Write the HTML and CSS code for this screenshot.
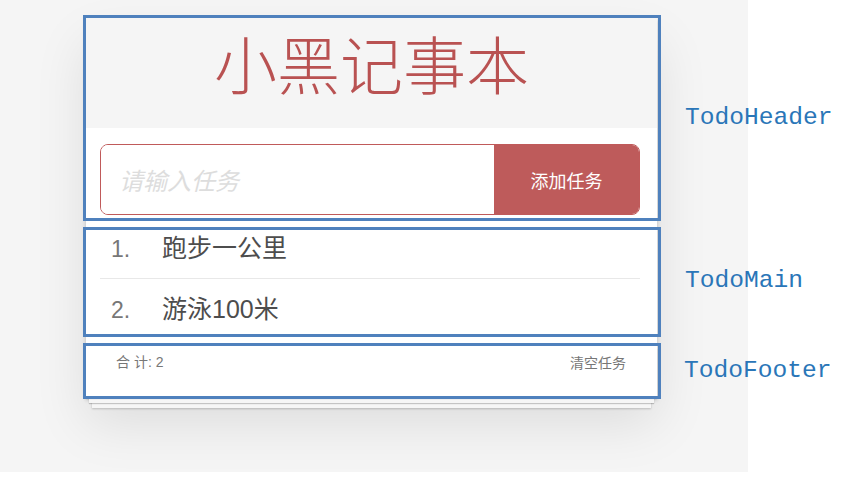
FILE: index.html
```html
<!DOCTYPE html>
<html lang="zh">
<head>
<meta charset="utf-8">
<title>小黑记事本</title>
<link rel="stylesheet" href="styles.css">
</head>
<body>
<div class="stage">
  <section class="todo-card">
    <header class="todo-header">
      <h1 class="title">小黑记事本</h1>
      <div class="input-section">
        <div class="input-row">
          <input class="new-todo" type="text" placeholder="请输入任务">
          <button class="add-btn">添加任务</button>
        </div>
      </div>
    </header>
    <ul class="todo-list">
      <li class="todo-item"><span class="index">1.</span><span class="label">跑步一公里</span></li>
      <li class="todo-item"><span class="index">2.</span><span class="label">游泳100米</span></li>
    </ul>
    <footer class="todo-footer">
      <span class="count">合 计: 2</span>
      <button class="clear">清空任务</button>
    </footer>
  </section>

  <div class="anno anno-header"></div>
  <div class="anno anno-main"></div>
  <div class="anno anno-footer"></div>
  <span class="anno-label label-header">TodoHeader</span>
  <span class="anno-label label-main">TodoMain</span>
  <span class="anno-label label-footer">TodoFooter</span>
</div>
</body>
</html>
```

FILE: styles.css
```css
* { box-sizing: border-box; }

html, body {
  margin: 0;
  padding: 0;
  background: #ffffff;
}

body {
  font-family: "Liberation Sans", "Noto Sans CJK SC", sans-serif;
}

.stage {
  position: relative;
  width: 748px;
  height: 472px;
  background: #f5f5f5;
  padding: 18px 0 0 86px;
}

.todo-card {
  width: 571px;
  position: relative;
  z-index: 0;
  background: #ffffff;
  box-shadow: 0 2px 4px 0 rgba(0, 0, 0, 0.2), 0 25px 50px 0 rgba(0, 0, 0, 0.1);
}

.todo-header {
  display: flex;
  flex-direction: column;
}

.title {
  margin: 0;
  background: #f5f5f5;
  height: 110px;
  padding-top: 12px;
  text-align: center;
  font-family: "Noto Sans CJK SC", sans-serif;
  font-weight: 300;
  font-size: 63px;
  line-height: 63px;
  color: #b95252;
}

.input-section {
  padding: 16px 17px 3px 14px;
}

.input-row {
  display: flex;
  height: 71px;
  border: 1px solid #c05a5a;
  border-radius: 8px;
  overflow: hidden;
}

.new-todo {
  flex: 1;
  border: none;
  outline: none;
  padding: 0 0 0 18px;
  font-family: "Noto Sans CJK SC", sans-serif;
  font-size: 24px;
  color: #555;
  background: #fff;
}

.new-todo::placeholder {
  color: #dddddd;
  font-style: italic;
}

.add-btn {
  width: 145px;
  border: none;
  background: #be5b5b;
  color: #ffffff;
  font-family: "Noto Sans CJK SC", sans-serif;
  font-size: 18px;
  padding: 0;
}

.todo-list {
  list-style: none;
  margin: 0;
  padding: 0 17px 0 14px;
}

.todo-item {
  display: flex;
  align-items: baseline;
  height: 60px;
  line-height: 60px;
  padding-left: 11px;
  font-size: 25px;
  color: #4d4d4d;
}

.todo-item + .todo-item {
  border-top: 1px solid #e8e8e8;
}

.index {
  width: 51px;
  color: #777;
  font-size: 23px;
}

.label {
  font-family: "Liberation Sans", "Noto Sans CJK SC", sans-serif;
}

.todo-footer {
  position: relative;
  display: flex;
  align-items: flex-start;
  justify-content: space-between;
  height: 60px;
  padding: 14px 31px 0 30px;
  font-size: 14px;
  line-height: 20px;
  color: #777;
  background: #fff;
}

.todo-footer::before {
  content: "";
  position: absolute;
  left: 0;
  right: 0;
  bottom: 0;
  height: 50px;
  overflow: hidden;
  z-index: -1;
  box-shadow: 0 1px 1px rgba(0, 0, 0, 0.2),
              0 8px 0 -3px #f6f6f6,
              0 9px 1px -3px rgba(0, 0, 0, 0.2),
              0 16px 0 -6px #f6f6f6,
              0 17px 2px -6px rgba(0, 0, 0, 0.2);
}

.clear {
  border: none;
  background: transparent;
  padding: 0;
  font-family: "Noto Sans CJK SC", sans-serif;
  font-size: 14px;
  line-height: 20px;
  color: #777;
}

.anno {
  position: absolute;
  left: 83px;
  width: 578px;
  border: 3px solid #4f81bd;
}

.anno-header { top: 15px; height: 206px; }
.anno-main { top: 227px; height: 110px; }
.anno-footer { top: 343px; height: 56px; }

.anno-label {
  position: absolute;
  left: 685px;
  font-family: "Liberation Mono", monospace;
  font-size: 24.6px;
  line-height: 25px;
  color: #2a76b8;
  white-space: nowrap;
}

.label-header { top: 105px; }
.label-main { top: 268px; }
.label-footer { top: 358px; left: 684px; }
```
